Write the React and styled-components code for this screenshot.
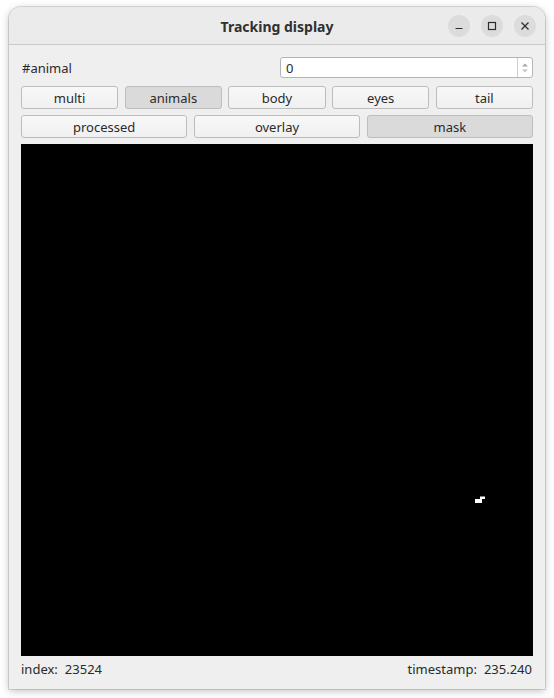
import React from 'react'
import styled, { createGlobalStyle } from 'styled-components'

const GlobalStyle = createGlobalStyle`
  html, body {
    margin: 0;
    padding: 0;
    background: #ffffff;
  }
  body {
    font-family: "Noto Sans", "DejaVu Sans", sans-serif;
    font-size: 13px;
    color: #2a2a2a;
  }
`

function App() {
  const topButtons = [
    { label: 'multi' },
    { label: 'animals', checked: true },
    { label: 'body' },
    { label: 'eyes' },
    { label: 'tail' },
  ]
  const viewButtons = [
    { label: 'processed' },
    { label: 'overlay' },
    { label: 'mask', checked: true },
  ]

  return (
    <>
      <GlobalStyle />
      <Desktop>
        <Window>
          <TitleBar>
            <Title>Tracking display</Title>
            <WindowControls>
              <ControlButton>
                <svg width="10" height="10" viewBox="0 0 10 10">
                  <path d="M1.5 7.5h7" stroke="#2e2e2e" strokeWidth="1.2" />
                </svg>
              </ControlButton>
              <ControlButton>
                <svg width="10" height="10" viewBox="0 0 10 10">
                  <rect x="1.5" y="1.5" width="7" height="7" fill="none" stroke="#2e2e2e" strokeWidth="1.2" />
                </svg>
              </ControlButton>
              <ControlButton>
                <svg width="10" height="10" viewBox="0 0 10 10">
                  <path d="M1.5 1.5l7 7M8.5 1.5l-7 7" stroke="#2e2e2e" strokeWidth="1.3" />
                </svg>
              </ControlButton>
            </WindowControls>
          </TitleBar>

          <Body>
            <AnimalRow>
              <Label>#animal</Label>
              <SpinBox>
                <SpinValue>0</SpinValue>
                <SpinArrows>
                  <svg width="8" height="14" viewBox="0 0 8 14">
                    <path d="M1 5.5L4 2.5L7 5.5Z" fill="#a8a8a8" />
                    <path d="M1 8.5L4 11.5L7 8.5Z" fill="#c4c4c4" />
                  </svg>
                </SpinArrows>
              </SpinBox>
            </AnimalRow>

            <ButtonRow $cols={5}>
              {topButtons.map((b) => (
                <ToggleButton key={b.label} $checked={b.checked}>{b.label}</ToggleButton>
              ))}
            </ButtonRow>

            <ButtonRow $cols={3}>
              {viewButtons.map((b) => (
                <ToggleButton key={b.label} $checked={b.checked}>{b.label}</ToggleButton>
              ))}
            </ButtonRow>

            <Display>
              <svg width="512" height="512" viewBox="0 0 512 512">
                <rect x="454" y="355" width="7" height="4" fill="#ffffff" />
                <rect x="459" y="352.5" width="5" height="2.5" fill="#ffffff" />
              </svg>
            </Display>

            <Footer>
              <FooterPair>
                <span>index:</span>
                <span>23524</span>
              </FooterPair>
              <FooterPair>
                <span>timestamp:</span>
                <span>235.240</span>
              </FooterPair>
            </Footer>
          </Body>
        </Window>
      </Desktop>
    </>
  )
}

export default App

const Desktop = styled.div`
  width: 554px;
  height: 698px;
  padding: 7px 9px 0 9px;
  box-sizing: border-box;
`

const Window = styled.div`
  width: 536px;
  height: 682px;
  background: #efefef;
  border-radius: 12px 12px 0 0;
  box-shadow: 0 0 0 1px rgba(0, 0, 0, 0.12), 0 2px 8px rgba(0, 0, 0, 0.25);
  overflow: hidden;
  display: flex;
  flex-direction: column;
`

const TitleBar = styled.div`
  height: 37px;
  flex-shrink: 0;
  background: #ebebeb;
  border-bottom: 1px solid #c9c9c9;
  position: relative;
  display: flex;
  align-items: center;
  justify-content: center;
`

const Title = styled.div`
  font-family: "Noto Sans", "DejaVu Sans", sans-serif;
  font-weight: 700;
  font-size: 14px;
  color: #303030;
  margin-top: 1px;
`

const WindowControls = styled.div`
  position: absolute;
  right: 9px;
  top: 8px;
  display: flex;
  gap: 11px;
`

const ControlButton = styled.div`
  width: 22px;
  height: 22px;
  border-radius: 50%;
  background: #dcdcdc;
  display: flex;
  align-items: center;
  justify-content: center;
`

const Body = styled.div`
  flex: 1;
  display: flex;
  flex-direction: column;
  padding: 12px 12px 0 12px;
`

const AnimalRow = styled.div`
  display: flex;
  align-items: center;
  justify-content: space-between;
  height: 21px;
  margin-bottom: 8px;
`

const Label = styled.div`
  padding-left: 1px;
`

const SpinBox = styled.div`
  width: 253px;
  height: 21px;
  box-sizing: border-box;
  background: #ffffff;
  border: 1px solid #b4b4b4;
  border-radius: 3px;
  display: flex;
  align-items: stretch;
`

const SpinValue = styled.div`
  flex: 1;
  display: flex;
  align-items: center;
  padding-left: 5px;
`

const SpinArrows = styled.div`
  width: 14px;
  border-left: 1px solid #cfcfcf;
  display: flex;
  align-items: center;
  justify-content: center;
`

const ButtonRow = styled.div`
  display: grid;
  grid-template-columns: repeat(${(p) => p.$cols}, 1fr);
  gap: 6.5px;
  margin-bottom: 6px;
`

const ToggleButton = styled.div`
  height: 23px;
  box-sizing: border-box;
  border: 1px solid #bdbdbd;
  border-radius: 3px;
  background: ${(p) => (p.$checked ? '#dadada' : 'linear-gradient(#f8f8f8, #f0f0f0)')};
  display: flex;
  align-items: center;
  justify-content: center;
  color: #2a2a2a;
`

const Display = styled.div`
  width: 512px;
  height: 512px;
  background: #000000;
  flex-shrink: 0;

  svg {
    display: block;
  }
`

const Footer = styled.div`
  display: flex;
  justify-content: space-between;
  align-items: center;
  height: 26px;
  padding: 0 1px 0 0;
`

const FooterPair = styled.div`
  display: flex;
  gap: 7px;
`
